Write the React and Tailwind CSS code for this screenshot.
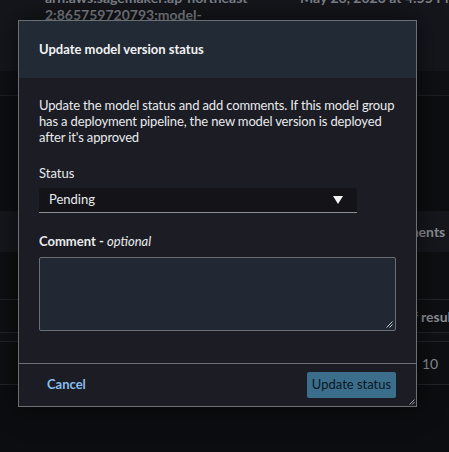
import React from "react";

function Backdrop() {
  return (
    <div className="absolute inset-0 flex flex-col text-[#7d8188]">
      {/* top table row, partly scrolled off */}
      <div className="h-[71px] bg-[#15161b] relative overflow-hidden">
        <div className="absolute left-[45px] top-[-11px] w-[240px] text-[14px] leading-[17px] font-bold">
          <div className="whitespace-nowrap">arn:aws:sagemaker:ap-northeast-</div>
          <div className="whitespace-nowrap">2:865759720793:model-</div>
        </div>
        <div className="absolute left-[300px] top-[-11px] text-[14px] leading-[17px] font-bold whitespace-nowrap">
          May 26, 2023 at 4:55 PM
        </div>
      </div>
      <div className="h-[25px] bg-[#0f1014] border-b border-[#1d1f24]"></div>
      <div className="h-[115px] bg-[#0d0e11]"></div>
      <div className="h-[41px] bg-[#16171c] flex items-center overflow-hidden">
        <span className="ml-[378px] text-[14px] font-bold text-[#8a8d93] whitespace-nowrap">Comments</span>
      </div>
      <div className="h-[48px] bg-[#0e0f12] border-b border-[#22242a]"></div>
      <div className="h-[33px] bg-[#0e0f12] flex items-center overflow-hidden border-b border-[#22242a]">
        <span className="ml-[405px] text-[14px] font-bold text-[#8a8d93] whitespace-nowrap">of results</span>
      </div>
      <div className="h-[9px] bg-[#101115] border-b border-[#22242a]"></div>
      <div className="h-[43px] bg-[#0e0f12] flex items-center border-b border-[#22242a]">
        <span className="ml-[422px] text-[14px] text-[#8a8d93]">10</span>
      </div>
      <div className="flex-1 bg-[#0c0d10]"></div>
    </div>
  );
}

export default function App() {
  return (
    <div
      className="relative w-[449px] h-[452px] overflow-hidden bg-[#0c0d10]"
      style={{ fontFamily: 'Lato, "Open Sans", sans-serif' }}
    >
      <Backdrop />

      {/* Modal */}
      <div className="absolute left-[18px] top-[20px] w-[399px] border border-[#6a6e75] bg-[#1b1c24] shadow-[0_0_24px_rgba(0,0,0,0.6)]">
        <div className="h-[57px] bg-[#222a36] flex items-center px-[20px]">
          <h2 className="text-[13px] font-bold text-[#f2f3f3]">Update model version status</h2>
        </div>

        <div className="px-[20px] pt-[19px] pb-[32px] text-[#e9ebed]">
          <p className="text-[13px] leading-[16px] tracking-[-0.15px]">
            Update the model status and add comments. If this model group has a deployment pipeline, the new model version is deployed after it's approved
          </p>

          <div className="mt-[20px]">
            <div className="text-[13px] leading-[16px] mb-[7px]">Status</div>
            <div className="w-[318px] h-[25px] bg-[#131318] rounded-t-[3px] border-b border-[#8d9096] flex items-center justify-between pl-[10px] pr-[14px]">
              <span className="text-[13px]">Pending</span>
              <svg width="10" height="8" viewBox="0 0 10 8">
                <path d="M0 0 L10 0 L5 8 Z" fill="#f2f3f3" />
              </svg>
            </div>
          </div>

          <div className="mt-[20px]">
            <div className="text-[13px] leading-[16px] mb-[8px] font-bold">
              Comment - <span className="italic font-normal">optional</span>
            </div>
            <div className="relative h-[74px] bg-[#212834] border border-[#6a6e75] rounded-[2px]">
              <svg className="absolute right-[2px] bottom-[2px]" width="7" height="7" viewBox="0 0 7 7">
                <path d="M0.5 6.5 L6.5 0.5 M3.5 6.5 L6.5 3.5" stroke="#c9ccd0" strokeWidth="1" />
              </svg>
            </div>
          </div>
        </div>

        <div className="relative border-t border-[#6a6e75] h-[43px] flex items-center justify-between pl-[28px] pr-[20px]">
          <button className="text-[13px] font-bold text-[#89bdee]">Cancel</button>
          <button className="h-[26px] w-[89px] rounded-[2px] bg-[#3b6e8b] flex items-center justify-center">
            <span className="text-[13px] text-[#0b1622]">Update status</span>
          </button>
          <svg className="absolute right-[1px] bottom-[1px]" width="6" height="6" viewBox="0 0 6 6">
            <path d="M0.5 5.5 L5.5 0.5 M3 5.5 L5.5 3" stroke="#9a9da2" strokeWidth="1" />
          </svg>
        </div>
      </div>
    </div>
  );
}
